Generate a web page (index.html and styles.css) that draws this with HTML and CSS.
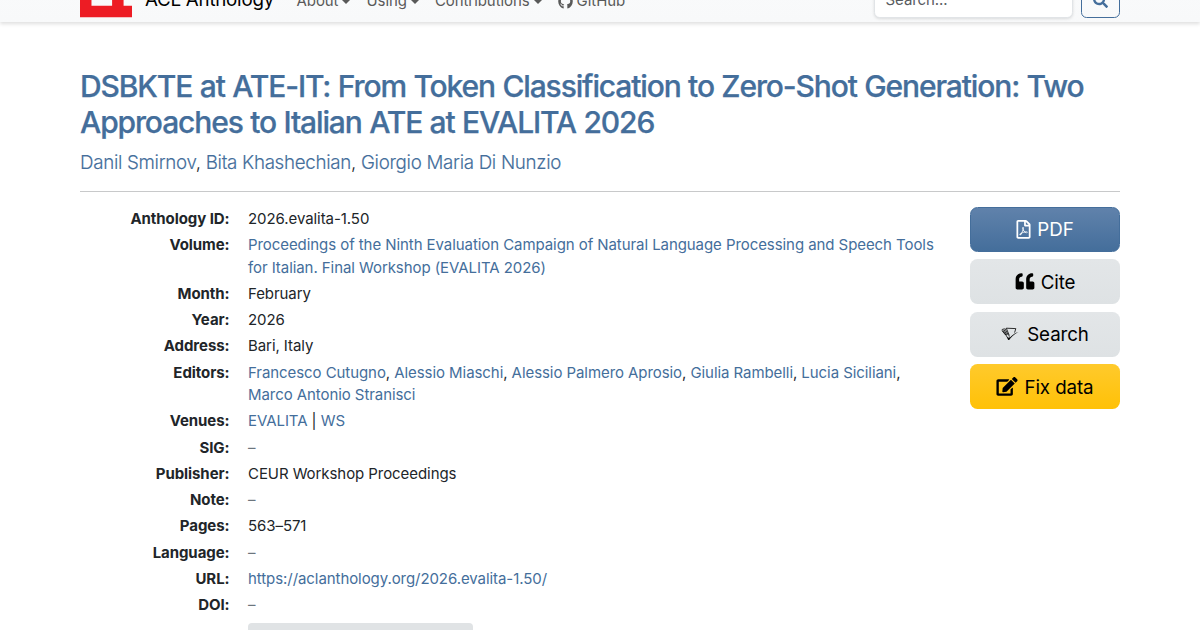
FILE: index.html
```html
<!DOCTYPE html>
<html lang="en">
<head>
<meta charset="utf-8">
<title>DSBKTE at ATE-IT - ACL Anthology</title>
<link rel="stylesheet" href="styles.css">
</head>
<body>
<header class="navbar">
  <div class="container navbar-inner">
    <a class="brand" href="#">
      <svg class="logo" viewBox="0 0 68 46"><path fill="#ed1c24" d="M41.98 0V3.02H0V46H68V30.99H56.99V0zM15.01 17.99H41.98V30.99H15.01z"/></svg>
      <span class="brand-name">ACL Anthology</span>
    </a>
    <nav class="nav">
      <a class="nav-link caret" href="#">About</a>
      <a class="nav-link caret" href="#">Using</a>
      <a class="nav-link caret" href="#">Contributions</a>
      <a class="nav-link" href="#"><svg class="github" viewBox="0 0 496 512"><path fill="currentColor" d="M165.9 397.400c0 2-2.300 3.600-5.200 3.600-3.300.3-5.600-1.300-5.600-3.600 0-2 2.300-3.600 5.200-3.600 3-.3 5.600 1.300 5.600 3.600zM244.800 8C106.100 8 0 113.300 0 252c0 110.900 69.800 205.800 169.500 239.200 12.800 2.300 17.300-5.600 17.300-12.100 0-6.200-.3-40.400-.3-61.400 0 0-70 15-84.700-29.800 0 0-11.400-29.100-27.800-36.600 0 0-22.900-15.700 1.600-15.400 0 0 24.900 2 38.600 25.800 21.900 38.600 58.600 27.500 72.900 20.900 2.300-16 8.800-27.100 16-33.700-55.900-6.200-112.300-14.300-112.300-110.500 0-27.500 7.600-41.300 23.600-58.900-2.600-6.500-11.100-33.300 2.600-67.900 20.900-6.500 69 27 69 27 20-5.600 41.500-8.500 62.800-8.500s42.800 2.900 62.800 8.500c0 0 48.100-33.600 69-27 13.700 34.700 5.200 61.400 2.600 67.900 16 17.700 25.800 31.500 25.800 58.900 0 96.500-58.900 104.200-114.800 110.500 9.200 7.900 17 22.900 17 46.400 0 33.700-.3 75.400-.3 83.600 0 6.500 4.600 14.400 17.300 12.100C428.200 457.800 496 362.900 496 252 496 113.300 383.500 8 244.800 8z"/></svg> GitHub</a>
    </nav>
    <form class="search-form">
      <div class="search-box">Search...</div>
      <button class="search-button" type="button"><svg class="search-icon" viewBox="0 0 512 512"><path fill="currentColor" d="M505 442.700L405.300 343c-4.500-4.500-10.600-7-17-7H372c27.600-35.300 44-79.700 44-128C416 93.100 322.900 0 208 0S0 93.100 0 208s93.100 208 208 208c48.300 0 92.700-16.400 128-44v16.300c0 6.400 2.500 12.500 7 17l99.700 99.700c9.400 9.400 24.600 9.400 33.900 0l28.300-28.300c9.400-9.400 9.400-24.600.1-34zM208 336c-70.700 0-128-57.200-128-128 0-70.700 57.200-128 128-128 70.700 0 128 57.200 128 128 0 70.700-57.200 128-128 128z"/></svg></button>
    </form>
  </div>
</header>
<main class="container paper">
  <h2 class="title"><a href="#">DSBKTE at ATE-IT: From Token Classification to Zero-Shot Generation: Two Approaches to Italian ATE at EVALITA 2026</a></h2>
  <p class="authors"><a href="#">Danil Smirnov</a>, <a href="#">Bita Khashechian</a>, <a href="#">Giorgio Maria Di Nunzio</a></p>
  <hr class="rule">
  <div class="columns">
    <dl class="details">
      <dt>Anthology ID:</dt><dd>2026.evalita-1.50</dd>
      <dt>Volume:</dt><dd><a href="#">Proceedings of the Ninth Evaluation Campaign of Natural Language Processing and Speech Tools for Italian. Final Workshop (EVALITA 2026)</a></dd>
      <dt>Month:</dt><dd>February</dd>
      <dt>Year:</dt><dd>2026</dd>
      <dt>Address:</dt><dd>Bari, Italy</dd>
      <dt>Editors:</dt><dd><a href="#">Francesco Cutugno</a>, <a href="#">Alessio Miaschi</a>, <a href="#">Alessio Palmero Aprosio</a>, <a href="#">Giulia Rambelli</a>, <a href="#">Lucia Siciliani</a>, <a href="#">Marco Antonio Stranisci</a></dd>
      <dt>Venues:</dt><dd><a href="#">EVALITA</a> | <a href="#">WS</a></dd>
      <dt>SIG:</dt><dd class="empty">–</dd>
      <dt>Publisher:</dt><dd>CEUR Workshop Proceedings</dd>
      <dt>Note:</dt><dd class="empty">–</dd>
      <dt>Pages:</dt><dd>563–571</dd>
      <dt>Language:</dt><dd class="empty">–</dd>
      <dt>URL:</dt><dd><a href="#">https://aclanthology.org/2026.evalita-1.50/</a></dd>
      <dt>DOI:</dt><dd class="empty">–</dd>
      <dt></dt><dd><div class="copy-button"></div></dd>
    </dl>
    <div class="actions">
      <a class="btn btn-primary" href="#"><svg class="icon icon-pdf" viewBox="0 0 384 512"><path fill="currentColor" d="M369.900 97.900L286 14C277 5 264.800-.1 252.100-.1H48C21.500 0 0 21.500 0 48v416c0 26.500 21.500 48 48 48h288c26.500 0 48-21.500 48-48V131.900c0-12.700-5.100-25-14.100-34zM332.100 128H256V51.900l76.100 76.100zM48 464V48h160v104c0 13.300 10.700 24 24 24h104v288H48zm250.200-143.700c-12.200-12-47-8.700-64.400-6.500-17.200-10.500-28.700-25-36.800-46.300 3.900-16.100 10.100-40.600 5.400-56-4.200-26.200-37.800-23.600-42.600-5.900-4.400 16.100-.4 38.500 7 67.100-10 23.900-24.900 56-35.400 74.400-20 10.300-47 26.200-51 46.200-3.300 15.800 26 55.200 76.100-31.200 22.400-7.400 46.800-16.500 68.400-20.100 18.900 10.200 41 17 55.800 17 25.500 0 28-28.200 17.500-38.700zm-198.100 77.800c5.100-13.700 24.500-29.500 30.400-35-19 30.300-30.400 35.700-30.400 35zm81.600-190.600c7.400 0 6.700 32.100 1.800 40.800-4.400-13.900-4.300-40.800-1.800-40.800zm-24.400 136.600c9.700-16.900 18-37 24.700-54.700 8.300 15.100 18.900 27.200 30.100 35.500-20.800 4.300-38.900 13.100-54.800 19.200zm131.600-5s-5 6-37.300-7.800c35.100-2.600 40.900 5.400 37.300 7.800z"/></svg><span>PDF</span></a>
      <a class="btn btn-secondary" href="#"><svg class="icon icon-quote" viewBox="0 0 512 512"><path fill="currentColor" d="M464 256h-80v-64c0-35.300 28.700-64 64-64h8c13.300 0 24-10.700 24-24V56c0-13.300-10.700-24-24-24h-8c-88.400 0-160 71.600-160 160v240c0 26.500 21.500 48 48 48h128c26.500 0 48-21.500 48-48V304c0-26.500-21.500-48-48-48zm-288 0H96v-64c0-35.300 28.700-64 64-64h8c13.300 0 24-10.700 24-24V56c0-13.300-10.700-24-24-24h-8C71.600 32 0 103.600 0 192v240c0 26.500 21.500 48 48 48h128c26.500 0 48-21.500 48-48V304c0-26.500-21.500-48-48-48z"/></svg><span>Cite</span></a>
      <a class="btn btn-secondary" href="#"><svg class="icon icon-scholar" viewBox="0 0 18 16"><path fill="none" stroke="currentColor" stroke-width=".8" d="M5.300 2.200L14.800 2.600L13.600 6.600M5.300 2.200L8.300 9.500M1 3L5 9M2.300 2.500L6 9M3.700 2.200L7.500 9.500M.9 4.600L5 9.500"/><path fill="currentColor" d="M7.200 14C9.300 10.700 12.500 7.700 17.500 5.900C13 8.500 10 11 8.200 14zM3.700 7L7.500 12.200L8.300 9L8.500 12L7.200 14z"/></svg><span>Search</span></a>
      <a class="btn btn-warning" href="#"><svg class="icon icon-edit" viewBox="0 0 576 512"><path fill="currentColor" d="M402.600 83.200l90.200 90.200c3.800 3.800 3.800 10 0 13.800L274.400 405.600l-92.800 10.300c-12.400 1.400-22.900-9.100-21.500-21.500l10.300-92.800L388.800 83.200c3.800-3.800 10-3.800 13.800 0zm162-22.900l-48.800-48.800c-15.200-15.200-39.900-15.200-55.200 0l-35.400 35.400c-3.800 3.800-3.800 10 0 13.800l90.200 90.200c3.800 3.800 10 3.800 13.800 0l35.400-35.400c15.200-15.300 15.200-40 0-55.200zM384 346.200V448H64V128h229.800c3.200 0 6.200-1.300 8.500-3.500l40-40c7.600-7.600 2.200-20.500-8.500-20.500H48C21.500 64 0 85.500 0 112v352c0 26.500 21.500 48 48 48h352c26.500 0 48-21.500 48-48V306.200c0-10.700-12.900-16-20.500-8.500l-40 40c-2.200 2.300-3.500 5.300-3.500 8.500z"/></svg><span>Fix data</span></a>
    </div>
  </div>
</main>
</body>
</html>
```
FILE: styles.css
```css
* { box-sizing: border-box; }
body {
  margin: 0;
  height: 630px;
  overflow: hidden;
  background: #fff;
  color: #212529;
  font: 15px/22.5px Inter, sans-serif;
  letter-spacing: -.07px;
}
a { color: #446e9b; text-decoration: none; }
.container { width: 1040px; margin: 0 auto; }

.navbar {
  height: 60px;
  margin-top: -38px;
  background: linear-gradient(#fafbfc, #f8f9fa);
  box-shadow: 0 1.900px 3.750px rgba(0, 0, 0, .13);
}
.navbar-inner { display: flex; align-items: center; height: 76px; }
.brand {
  display: flex;
  align-items: center;
  width: 216.500px;
  color: #000;
  font-size: 18.75px;
  letter-spacing: -.25px;
}
.logo { display: block; width: 52px; height: 35.200px; margin-right: 13px; }
.nav { display: flex; gap: 16px; padding-top: 3px; }
.nav-link { display: flex; align-items: center; color: #595959; }
.caret::after {
  content: "";
  margin-left: 4px;
  border: 4.500px solid transparent;
  border-top-color: currentColor;
  border-bottom: 0;
}
.github { width: 15px; height: 15px; margin-right: 4px; }
.search-form { display: flex; gap: 8px; margin-left: auto; }
.search-box {
  width: 199px;
  height: 36px;
  padding: 6px 11px;
  border: 1px solid #e1e4e7;
  border-radius: 5.600px;
  background: #fff;
  box-shadow: 0 1px 3px rgba(0, 0, 0, .12);
  color: #595c5f;
}
.search-button {
  width: 39.500px;
  height: 36px;
  padding: 0;
  border: 1px solid #446e9b;
  border-radius: 5.600px;
  background: transparent;
  color: #446e9b;
}
.search-icon { display: block; width: 15px; height: 15px; margin: auto; }

.paper { padding-top: 46px; }
.title {
  margin: 0 0 8.500px;
  font-size: 30px;
  line-height: 36px;
  font-weight: 500;
  letter-spacing: -1.130px;
  word-spacing: .6px;
  -webkit-text-stroke: .25px #446e9b;
}
.authors {
  margin: 0;
  font-size: 18.75px;
  line-height: 28px;
  font-weight: 300;
  letter-spacing: -.305px;
}
.authors a { -webkit-text-stroke: .15px #446e9b; }
.rule { height: 1px; margin: 14px 0 15px; border: 0; background: #c8c9ca; }
.columns { display: flex; justify-content: space-between; }
.details {
  display: grid;
  grid-template-columns: 149.500px 696px;
  column-gap: 18.500px;
  row-gap: 3.750px;
  margin: 0;
  padding-top: 1.400px;
}
dt { font-weight: 700; text-align: right; letter-spacing: -.07px; }
dd { margin: 0; }
.empty { color: #6c757d; }
.copy-button { width: 225px; height: 30px; margin-top: 3px; border-radius: 4px; background: #e0e3e5; }

.actions { display: flex; flex-direction: column; gap: 7.500px; width: 150px; padding-top: .3px; }
.btn {
  display: flex;
  align-items: center;
  justify-content: center;
  gap: 6px;
  height: 45px;
  border-radius: 7.500px;
  color: #000;
  font-size: 18.75px;
  letter-spacing: -.1px;
}
.btn span { padding-top: 2.500px; }
.icon { display: block; height: 18.75px; }
.icon-pdf { width: 15px; }
.icon-quote { width: 20px; }
.icon-scholar { width: 18px; height: 16px; margin-right: 2px; }
.icon-edit { width: 22px; }
.btn-primary { background: linear-gradient(#6082ab, #446e9b); color: #fff; border: 1px solid #446e9b; }
.btn-secondary { background: linear-gradient(#e3e6e8, #dee2e4); }
.btn-warning { background: linear-gradient(#ffca2c, #ffc107); }
```
